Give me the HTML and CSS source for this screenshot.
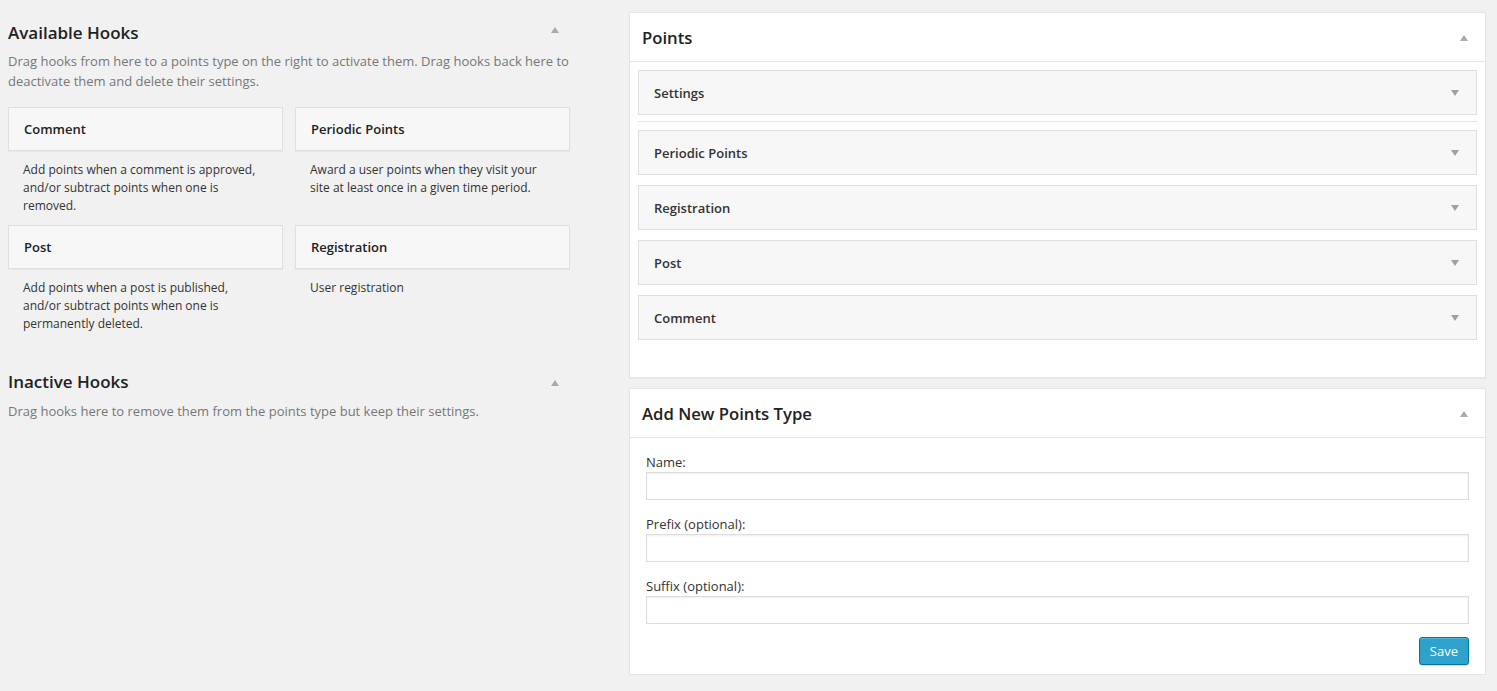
FILE: index.html
```html
<!DOCTYPE html>
<html lang="en">
<head>
<meta charset="utf-8">
<title>Points Hooks</title>
<link rel="stylesheet" href="styles.css">
</head>
<body>
<div class="page">
  <div class="left-col">
    <section class="area">
      <div class="area-head">
        <h2 class="area-title">Available Hooks</h2>
        <span class="tri-up"></span>
      </div>
      <p class="area-desc">Drag hooks from here to a points type on the right to activate them. Drag hooks back here to deactivate them and delete their settings.</p>
      <div class="hook-grid">
        <div class="hook">
          <div class="hook-box">Comment</div>
          <p class="hook-desc">Add points when a comment is approved, and/or subtract points when one is removed.</p>
        </div>
        <div class="hook">
          <div class="hook-box">Periodic Points</div>
          <p class="hook-desc">Award a user points when they visit your site at least once in a given time period.</p>
        </div>
        <div class="hook">
          <div class="hook-box">Post</div>
          <p class="hook-desc">Add points when a post is published, and/or subtract points when one is permanently deleted.</p>
        </div>
        <div class="hook">
          <div class="hook-box">Registration</div>
          <p class="hook-desc">User registration</p>
        </div>
      </div>
    </section>
    <section class="area area-inactive">
      <div class="area-head">
        <h2 class="area-title">Inactive Hooks</h2>
        <span class="tri-up"></span>
      </div>
      <p class="area-desc">Drag hooks here to remove them from the points type but keep their settings.</p>
    </section>
  </div>

  <div class="right-col">
    <section class="panel">
      <div class="panel-head">
        <h3 class="panel-title">Points</h3>
        <span class="tri-up"></span>
      </div>
      <div class="panel-body panel-points">
        <div class="item"><span>Settings</span><span class="tri-down"></span></div>
        <hr class="sep">
        <div class="item-list">
          <div class="item"><span>Periodic Points</span><span class="tri-down"></span></div>
          <div class="item"><span>Registration</span><span class="tri-down"></span></div>
          <div class="item"><span>Post</span><span class="tri-down"></span></div>
          <div class="item"><span>Comment</span><span class="tri-down"></span></div>
        </div>
      </div>
    </section>

    <section class="panel">
      <div class="panel-head">
        <h3 class="panel-title">Add New Points Type</h3>
        <span class="tri-up"></span>
      </div>
      <form class="panel-body panel-form">
        <label class="field">
          <span class="field-label">Name:</span>
          <input type="text" class="field-input">
        </label>
        <label class="field">
          <span class="field-label">Prefix (optional):</span>
          <input type="text" class="field-input">
        </label>
        <label class="field">
          <span class="field-label">Suffix (optional):</span>
          <input type="text" class="field-input">
        </label>
        <div class="actions">
          <button type="button" class="btn-primary">Save</button>
        </div>
      </form>
    </section>
  </div>
</div>
</body>
</html>
```

FILE: styles.css
```css
* { box-sizing: border-box; }

html, body {
  margin: 0;
  padding: 0;
  background: #f1f1f1;
  font-family: "Open Sans", "Liberation Sans", sans-serif;
  color: #444;
  font-size: 13px;
}

.page {
  display: flex;
  align-items: flex-start;
  padding: 12px 11px 0 8px;
  gap: 59px;
}

.left-col {
  width: 562px;
  flex: none;
}

.right-col {
  flex: 1;
  display: flex;
  flex-direction: column;
  gap: 10px;
}

/* Left areas */
.area-head {
  display: flex;
  align-items: center;
  justify-content: space-between;
  padding-right: 11px;
}

.area-title {
  margin: 9px 0 0;
  font-size: 17px;
  line-height: 24px;
  font-weight: 600;
  color: #222;
}

.area-desc {
  margin: 6px 0 0;
  font-size: 13px;
  line-height: 20px;
  color: #777;
}

.area-inactive {
  margin-top: 37px;
}

.area-inactive .area-title { margin-top: 0; }
.area-inactive .area-desc { margin-top: 7px; }

.tri-up {
  width: 0;
  height: 0;
  border-left: 4px solid transparent;
  border-right: 4px solid transparent;
  border-bottom: 6px solid #aaa;
  margin-top: 2px;
}

.tri-down {
  width: 0;
  height: 0;
  border-left: 4px solid transparent;
  border-right: 4px solid transparent;
  border-top: 6px solid #a0a0a0;
}

.hook-grid {
  margin-top: 16px;
  display: grid;
  grid-template-columns: 275px 275px;
  column-gap: 12px;
  row-gap: 10px;
}

.hook-box {
  height: 44px;
  background: #f7f7f7;
  border: 1px solid #dfdfdf;
  box-shadow: 0 1px 1px rgba(0,0,0,0.04);
  padding: 0 15px;
  display: flex;
  align-items: center;
  font-weight: 600;
  color: #222;
  font-size: 13px;
}

.hook-desc {
  margin: 0;
  padding: 10px 15px 0;
  line-height: 18px;
  font-size: 12px;
  color: #333;
}

/* Panels */
.panel {
  background: #fff;
  border: 1px solid #e5e5e5;
  box-shadow: 0 1px 1px rgba(0,0,0,0.04);
}

.panel-head {
  height: 49px;
  border-bottom: 1px solid #e5e5e5;
  display: flex;
  align-items: center;
  justify-content: space-between;
  padding: 0 17px 0 12px;
}

.panel-title {
  margin: 0;
  font-size: 16.7px;
  font-weight: 600;
  color: #222;
}

.panel-points {
  padding: 8px 8px 37px;
}

.item {
  height: 45px;
  background: #f7f7f7;
  border: 1px solid #dfdfdf;
  display: flex;
  align-items: center;
  justify-content: space-between;
  padding: 0 17px 0 15px;
  font-weight: 600;
  color: #333;
  font-size: 13px;
}

.sep {
  margin: 6px 0 7px;
  border: 0;
  height: 2px;
  background: #e5e5e5;
  border-bottom: 1px solid #fff;
}

.item-list {
  display: flex;
  flex-direction: column;
  gap: 10px;
}

.panel-form {
  padding: 15px 16px 9px;
  display: flex;
  flex-direction: column;
  gap: 15px;
}

.field {
  display: flex;
  flex-direction: column;
  gap: 1px;
}

.field-label {
  line-height: 18px;
  color: #333;
  font-size: 13px;
}

.field-input {
  height: 28px;
  border: 1px solid #ddd;
  box-shadow: inset 0 1px 2px rgba(0,0,0,0.07);
  background: #fff;
  font: inherit;
  margin: 0;
}

.actions {
  display: flex;
  justify-content: flex-end;
  margin-top: -2px;
}

.btn-primary {
  height: 28px;
  padding: 0 10px;
  background: #2ea2cc;
  border: 1px solid #0074a2;
  border-radius: 3px;
  box-shadow: inset 0 1px 0 rgba(120,200,230,0.5), 0 1px 0 rgba(0,0,0,0.15);
  color: #fff;
  font-family: inherit;
  font-size: 13px;
  line-height: 26px;
}
```
